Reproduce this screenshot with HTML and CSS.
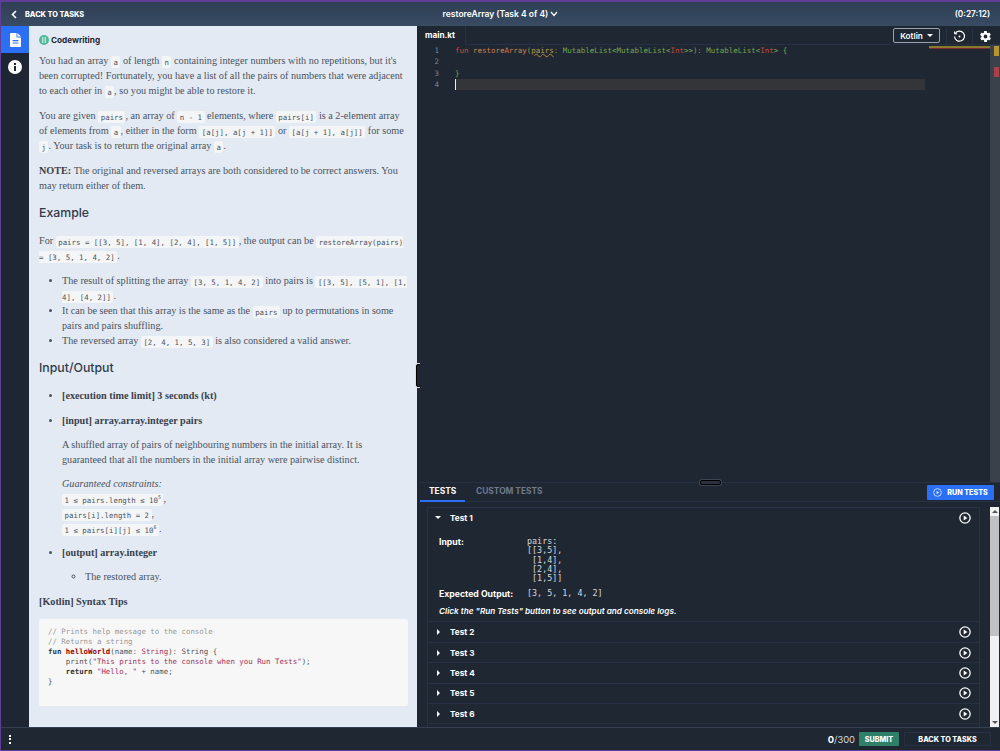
FILE: index.html
```html
<!DOCTYPE html>
<html lang="en">
<head>
    <meta charset="UTF-8">
    <title>restoreArray (Task 4 of 4)</title>
    <link rel="stylesheet" href="styles.css">
</head>
<body>
<div class="app">

    <!-- Top bar -->
    <header class="topbar">
        <a class="back">
            <svg width="6" height="9" viewBox="0 0 6 9"><path d="M5 1 1.5 4.5 5 8" fill="none" stroke="#fff" stroke-width="1.6"/></svg>
            <span>BACK TO TASKS</span>
        </a>
        <div class="task-title">restoreArray (Task 4 of 4)
            <svg width="8" height="6" viewBox="0 0 8 6"><path d="M1 1 4 4.5 7 1" fill="none" stroke="#fff" stroke-width="1.2"/></svg>
        </div>
        <div class="timer">(0:27:12)</div>
    </header>

    <div class="main">
        <!-- Sidebar -->
        <nav class="sidebar">
            <div class="side-btn active">
                <svg width="11" height="14" viewBox="0 0 11 14"><path fill="#fff" d="M6.5 0H1a1 1 0 0 0-1 1v12a1 1 0 0 0 1 1h9a1 1 0 0 0 1-1V4.5H7.2a.7.7 0 0 1-.7-.7zM2.6 7h5.8v1.2H2.6zm0 2.4h5.8v1.2H2.6zM7.4 0v3.6H11z"/></svg>
            </div>
            <div class="side-btn">
                <svg width="14" height="14" viewBox="0 0 14 14"><circle cx="7" cy="7" r="7" fill="#fff"/><rect x="6" y="6" width="2" height="5" fill="#1e2633"/><rect x="6" y="3" width="2" height="2" fill="#1e2633"/></svg>
            </div>
        </nav>

        <!-- Task description -->
        <section class="description">
            <div class="kind">
                <svg width="10" height="10" viewBox="0 0 10 10"><circle cx="5" cy="5" r="5" fill="#4dbb98"/><rect x="3.2" y="2" width="1.1" height="6" fill="#e3eaf3"/><rect x="5.7" y="2" width="1.1" height="6" fill="#e3eaf3"/></svg>
                <span>Codewriting</span>
            </div>
            <p>You had an array <code>a</code> of length <code>n</code> containing integer numbers with no repetitions, but it's been corrupted! Fortunately, you have a list of all the pairs of numbers that were adjacent to each other in <code>a</code>, so you might be able to restore it.</p>
            <p>You are given <code>pairs</code>, an array of <code>n - 1</code> elements, where <code>pairs[i]</code> is a 2-element array of elements from <code>a</code>, either in the form <code>[a[j], a[j + 1]]</code> or <code>[a[j + 1], a[j]]</code> for some <code>j</code>. Your task is to return the original array <code>a</code>.</p>
            <p><strong>NOTE:</strong> The original and reversed arrays are both considered to be correct answers. You may return either of them.</p>
            <h2>Example</h2>
            <p>For <code>pairs = [[3, 5], [1, 4], [2, 4], [1, 5]]</code>, the output can be <code>restoreArray(pairs) = [3, 5, 1, 4, 2]</code>.</p>
            <ul>
                <li>The result of splitting the array <code>[3, 5, 1, 4, 2]</code> into pairs is <code>[[3, 5], [5, 1], [1, 4], [4, 2]]</code>.</li>
                <li>It can be seen that this array is the same as the <code>pairs</code> up to permutations in some pairs and pairs shuffling.</li>
                <li>The reversed array <code>[2, 4, 1, 5, 3]</code> is also considered a valid answer.</li>
            </ul>
            <h2>Input/Output</h2>
            <ul class="io">
                <li><strong>[execution time limit] 3 seconds (kt)</strong></li>
                <li>
                    <strong>[input] array.array.integer pairs</strong>
                    <p>A shuffled array of pairs of neighbouring numbers in the initial array. It is guaranteed that all the numbers in the initial array were pairwise distinct.</p>
                    <p class="constraints"><em>Guaranteed constraints:</em><br>
                        <code>1 ≤ pairs.length ≤ 10<sup>5</sup></code>,<br>
                        <code>pairs[i].length = 2</code>,<br>
                        <code>1 ≤ pairs[i][j] ≤ 10<sup>6</sup></code>.</p>
                </li>
                <li>
                    <strong>[output] array.integer</strong>
                    <ul class="sub"><li>The restored array.</li></ul>
                </li>
            </ul>
            <p class="tips"><strong>[Kotlin] Syntax Tips</strong></p>
            <pre class="snippet"><span class="c">// Prints help message to the console
// Returns a string</span>
<b>fun</b> <b class="fn">helloWorld</b>(name: <span class="s">String</span>): String {
    print(<span class="s">"This prints to the console when you Run Tests"</span>);
    <b>return</b> <span class="s">"Hello, "</span> + name;
}</pre>
        </section>

        <div class="splitter"><span class="grip"></span></div>

        <div class="workspace">
            <!-- Editor -->
            <section class="editor">
                <div class="editor-head">
                    <div class="file-tab">main.kt</div>
                    <div class="editor-tools">
                        <div class="lang">Kotlin <i class="caret"></i></div>
                        <div class="tool">
                            <svg width="13" height="13" viewBox="0 0 13 13" fill="none" stroke="#fff" stroke-width="1.2"><path d="M2.2 3.6A5 5 0 1 1 1.5 6.5"/><path d="M1.6 1.4v2.5h2.5" stroke-width="1"/><circle cx="6.5" cy="6.5" r=".9" fill="#fff" stroke="none"/></svg>
                        </div>
                        <div class="tool">
                            <svg width="13" height="13" viewBox="0 0 24 24"><path fill="#fff" d="M19.4 13c.1-.3.1-.7.1-1s0-.7-.1-1l2.1-1.6c.2-.2.2-.4.1-.6l-2-3.5c-.1-.2-.4-.3-.6-.2l-2.5 1a7 7 0 0 0-1.7-1l-.4-2.6c0-.3-.2-.5-.5-.5h-4c-.3 0-.5.2-.5.5l-.4 2.6a7 7 0 0 0-1.7 1l-2.5-1c-.2-.1-.5 0-.6.2l-2 3.5c-.1.2-.1.4.1.6L4.6 11c-.1.3-.1.7-.1 1s0 .7.1 1l-2.1 1.6c-.2.2-.2.4-.1.6l2 3.5c.1.2.4.3.6.2l2.5-1c.5.4 1.1.7 1.7 1l.4 2.6c0 .3.2.5.5.5h4c.3 0 .5-.2.5-.5l.4-2.6a7 7 0 0 0 1.7-1l2.5 1c.2.1.5 0 .6-.2l2-3.5c.1-.2.1-.4-.1-.6zM12 15.5a3.5 3.5 0 1 1 0-7 3.5 3.5 0 0 1 0 7z"/></svg>
                        </div>
                    </div>
                </div>
                <div class="editor-body">
                    <div class="code">
                        <div class="line"><span class="num">1</span><span class="src"><span class="kw">fun</span> <span class="fnc">restoreArray</span><span class="ty">(</span><span class="warn">pairs</span><span class="ty">: MutableList&lt;MutableList&lt;</span><span class="kw">Int</span><span class="ty">&gt;&gt;): MutableList&lt;</span><span class="kw">Int</span><span class="ty">&gt; {</span></span></div>
                        <div class="line"><span class="num">2</span><span class="src"></span></div>
                        <div class="line"><span class="num">3</span><span class="src"><span class="ty">}</span></span></div>
                        <div class="line current"><span class="num">4</span><span class="src"></span></div>
                    </div>
                    <div class="overview">
                        <i class="mark-y"></i><i class="mark-r"></i>
                    </div>
                    <i class="mini"></i>
                </div>
            </section>

            <span class="hgrip"></span>

            <!-- Tests -->
            <section class="tests">
                <div class="tabs">
                    <div class="tab active">TESTS</div>
                    <div class="tab">CUSTOM TESTS</div>
                    <button class="run-btn">
                        <svg width="9" height="9" viewBox="0 0 14 14" fill="none"><circle cx="7" cy="7" r="6" stroke="#cfe0ff" stroke-width="1.4"/><path d="M5.5 4.2 9.7 7l-4.2 2.8z" fill="#cfe0ff"/></svg>
                        RUN TESTS
                    </button>
                </div>
                <div class="test-area">
                    <div class="test-list">
                        <div class="test open">
                            <div class="test-head"><i class="arrow-down"></i><span>Test 1</span><svg class="play" width="12" height="12" viewBox="0 0 14 14" fill="none"><circle cx="7" cy="7" r="6" stroke="#fff" stroke-width="1.5"/><path d="M5.5 4 9.8 7l-4.3 3z" fill="#fff"/></svg></div>
                            <div class="test-body">
                                <div class="io-row"><span class="io-label">Input:</span><pre class="io-val">pairs:
[[3,5],
 [1,4],
 [2,4],
 [1,5]]</pre></div>
                                <div class="io-row expected"><span class="io-label">Expected Output:</span><pre class="io-val">[3, 5, 1, 4, 2]</pre></div>
                                <div class="hint">Click the "Run Tests" button to see output and console logs.</div>
                            </div>
                        </div>
                        <div class="test"><div class="test-head"><i class="arrow"></i><span>Test 2</span><svg class="play" width="12" height="12" viewBox="0 0 14 14" fill="none"><circle cx="7" cy="7" r="6" stroke="#fff" stroke-width="1.5"/><path d="M5.5 4 9.8 7l-4.3 3z" fill="#fff"/></svg></div></div>
                        <div class="test"><div class="test-head"><i class="arrow"></i><span>Test 3</span><svg class="play" width="12" height="12" viewBox="0 0 14 14" fill="none"><circle cx="7" cy="7" r="6" stroke="#fff" stroke-width="1.5"/><path d="M5.5 4 9.8 7l-4.3 3z" fill="#fff"/></svg></div></div>
                        <div class="test"><div class="test-head"><i class="arrow"></i><span>Test 4</span><svg class="play" width="12" height="12" viewBox="0 0 14 14" fill="none"><circle cx="7" cy="7" r="6" stroke="#fff" stroke-width="1.5"/><path d="M5.5 4 9.8 7l-4.3 3z" fill="#fff"/></svg></div></div>
                        <div class="test"><div class="test-head"><i class="arrow"></i><span>Test 5</span><svg class="play" width="12" height="12" viewBox="0 0 14 14" fill="none"><circle cx="7" cy="7" r="6" stroke="#fff" stroke-width="1.5"/><path d="M5.5 4 9.8 7l-4.3 3z" fill="#fff"/></svg></div></div>
                        <div class="test"><div class="test-head"><i class="arrow"></i><span>Test 6</span><svg class="play" width="12" height="12" viewBox="0 0 14 14" fill="none"><circle cx="7" cy="7" r="6" stroke="#fff" stroke-width="1.5"/><path d="M5.5 4 9.8 7l-4.3 3z" fill="#fff"/></svg></div></div>
                    </div>
                    <div class="scrollbar">
                        <i class="sb-up"></i><div class="sb-thumb"></div><i class="sb-down"></i>
                    </div>
                </div>
            </section>
        </div>
    </div>

    <!-- Bottom bar -->
    <footer class="footer">
        <div class="dots"><i></i><i></i><i></i></div>
        <div class="score"><b>0</b>/300</div>
        <button class="submit">SUBMIT</button>
        <button class="back-btn">BACK TO TASKS</button>
    </footer>
</div>
</body>
</html>
```

FILE: styles.css
```css
* {
    box-sizing: border-box;
}

html, body {
    margin: 0;
    height: 100%;
}

body {
    background: #5f3d99;
    font-family: Inter, sans-serif;
    color: #fff;
}

.app {
    height: 751px;
    padding: 2px 0 1px 1px;
    display: flex;
    flex-direction: column;
    overflow: hidden;
}

/* top bar */
.topbar {
    height: 24px;
    flex: none;
    background: linear-gradient(#2f3f55, #384b63);
    display: grid;
    grid-template-columns: 1fr 1fr 1fr;
    align-items: center;
    font-size: 8px;
}

.back {
    display: flex;
    align-items: center;
    gap: 8px;
    padding-left: 10px;
    font-weight: 800;
    font-size: 7.3px;
}

.task-title {
    font-size: 8.5px;
    font-weight: 600;
    white-space: nowrap;
    justify-self: center;
}

.timer {
    text-align: right;
    font-size: 8.3px;
    font-weight: 600;
    padding-right: 10px;
}

.main {
    flex: 1;
    display: flex;
    min-height: 0;
}

/* sidebar */
.sidebar {
    width: 28px;
    flex: none;
    background: #1e2633;
}

.side-btn {
    height: 27px;
    display: flex;
    align-items: center;
    justify-content: center;
}

.side-btn.active {
    background: #2b6ff5;
}

/* description */
.description {
    width: 388px;
    flex: none;
    background: #e3eaf3;
    color: #4b535e;
    padding: 8px 9px 0 10px;
    font-family: "Liberation Serif", serif;
    font-size: 10.2px;
    line-height: 15px;
    overflow: hidden;
}

.kind {
    display: flex;
    align-items: center;
    gap: 2px;
    height: 12px;
    margin-bottom: 7px;
    font-family: Inter, sans-serif;
    font-size: 8.2px;
    font-weight: 700;
    color: #1e2633;
}

.description p {
    margin: 0 0 10px;
}

.description strong {
    color: #3a414b;
}

code {
    font-family: "DejaVu Sans Mono", monospace;
    font-size: 7.4px;
    line-height: 1;
    background: #f4f5f6;
    border-radius: 2px;
    padding: 1.5px 2.5px;
}

sup {
    font-size: 5px;
    line-height: 0;
}

.description h2 {
    font-family: Inter, sans-serif;
    font-size: 12.3px;
    font-weight: 500;
    color: #2f3b4c;
    margin: 0;
    padding: 2px 0 13px;
    line-height: 15px;
}

.description ul {
    margin: 0 0 10px;
    padding-left: 23px;
}

.io > li {
    margin-bottom: 9px;
}

.io > li:first-child {
    margin-bottom: 10px;
}

.io > li p {
    margin-top: 9px;
    margin-bottom: 0;
}

.sub {
    list-style: circle;
    margin-top: 9px !important;
    margin-bottom: 0 !important;
}

.snippet {
    margin: 0;
    height: 87px;
    padding: 8px 9px;
    background: #f7f7f7;
    border-radius: 2px;
    font-family: "DejaVu Sans Mono", monospace;
    font-size: 7.4px;
    line-height: 10px;
    color: #555;
}

.snippet .c { color: #999; }
.snippet b { color: #333; }
.snippet .fn { color: #900; }
.snippet .s { color: #a3325c; }

/* splitter */
.splitter {
    width: 3px;
    flex: none;
    background: #1e2633;
    position: relative;
}

.grip {
    position: absolute;
    left: -1px;
    top: 338px;
    width: 5px;
    height: 23px;
    background: #1e2633;
    border: 1px solid #000;
    border-radius: 2px;
    box-shadow: 0 0 0 1px #d9dfe6;
}

/* editor */
.workspace {
    flex: 1;
    min-width: 0;
    display: flex;
    flex-direction: column;
    background: #1f2733;
    position: relative;
}

.editor {
    height: 456px;
    flex: none;
    display: flex;
    flex-direction: column;
}

.editor-head {
    height: 19px;
    flex: none;
    display: flex;
    justify-content: space-between;
    border-bottom: 1px solid #263244;
}

.file-tab {
    width: 46px;
    height: 19px;
    padding: 4px 0 0 5px;
    font-size: 8.2px;
    font-weight: 700;
    background: #1f2733;
    border-right: 1px solid #263244;
}

.editor-tools {
    display: flex;
    align-items: flex-start;
    padding-top: 2px;
}

.lang {
    width: 47px;
    height: 15px;
    margin-right: 6px;
    border: 1px solid #9aa3ae;
    border-radius: 2px;
    font-size: 8.2px;
    font-weight: 600;
    display: flex;
    align-items: center;
    justify-content: center;
    gap: 4px;
}

.caret {
    border: 3px solid transparent;
    border-top-color: #fff;
    border-bottom: 0;
}

.tool {
    width: 26px;
    height: 16px;
    display: flex;
    align-items: center;
    justify-content: center;
    border-left: 1px solid #263244;
}

.editor-tools .tool:last-child {
    padding-right: 0;
    margin-right: 2px;
}

.editor-body {
    flex: 1;
    display: flex;
    position: relative;
    min-height: 0;
}

.code {
    flex: 1;
    font-family: "DejaVu Sans Mono", monospace;
    font-size: 7.46px;
}

.line {
    display: flex;
    height: 11.3px;
    line-height: 11.3px;
}

.num {
    width: 35px;
    flex: none;
    padding-right: 16px;
    text-align: right;
    color: #7b8593;
}

.src {
    width: 470px;
    flex: none;
    white-space: pre;
}

.current .src {
    background: #333538;
    border-left: 1px solid #eee;
}

.kw { color: #c9483a; }
.fnc { color: #cf7f4c; }
.ty { color: #76a34f; }

.warn {
    color: #c29a4c;
    text-decoration: underline wavy #b5893a .6px;
    text-underline-offset: 0;
}

.overview {
    position: absolute;
    right: 0;
    top: 0;
    bottom: 0;
    width: 10px;
    background: #3b414b;
}

.mark-y, .mark-r {
    position: absolute;
    left: 4px;
    width: 5px;
}

.mark-y { top: 1px; height: 10px; background: #b8962f; }
.mark-r { top: 22px; height: 10px; background: #a8404a; }

.mini {
    position: absolute;
    left: 509px;
    top: 1px;
    width: 61px;
    height: 3px;
    background: linear-gradient(#8c7a2e 50%, #7c2c34 50%);
}

.hgrip {
    position: absolute;
    left: 280px;
    top: 454px;
    width: 21px;
    height: 5px;
    border: 1px solid #000;
    border-radius: 2px;
    background: #2a3240;
    box-shadow: 0 0 0 1px #3a4554;
    z-index: 2;
}

/* tests */
.tests {
    flex: 1;
    min-height: 0;
    display: flex;
    flex-direction: column;
    border-top: 1px solid #263244;
}

.tabs {
    height: 19px;
    flex: none;
    display: flex;
    align-items: stretch;
    border-bottom: 1px solid #263244;
    position: relative;
    font-size: 8.4px;
    font-weight: 700;
}

.tab {
    padding: 3px 9px 0;
    color: #6f7a8c;
}

.tab:nth-child(2) {
    padding-left: 11px;
}

.tab.active {
    color: #fff;
    width: 45px;
    border-bottom: 2px solid #2b6ff5;
    height: 19px;
}

.run-btn {
    margin-left: auto;
    margin-right: 6px;
    margin-top: 2px;
    width: 67px;
    height: 15px;
    background: #2b6ff5;
    color: #fff;
    border: 0;
    border-radius: 1px;
    font-family: Inter, sans-serif;
    font-size: 7.2px;
    font-weight: 800;
    display: flex;
    align-items: center;
    justify-content: center;
    gap: 5px;
    padding: 0;
}

.test-area {
    flex: 1;
    min-height: 0;
    display: flex;
    padding: 5px 0 0 7px;
    overflow: hidden;
}

.test-list {
    width: 553px;
    flex: none;
    border: 1px solid #263244;
    border-bottom: 0;
}

.test {
    border-bottom: 1px solid #263244;
}

.test-head {
    height: 19.4px;
    display: flex;
    align-items: center;
    padding: 0 8px 0 7px;
    font-size: 8.2px;
    font-weight: 700;
}

.test-head span {
    margin-left: 7px;
}

.test.open .test-head {
    height: 19px;
}

.play {
    margin-left: auto;
}

.arrow {
    width: 5px;
    border: 3px solid transparent;
    border-left-color: #fff;
    border-right: 0;
    margin-left: 2px;
    margin-right: 1px;
}

.arrow-down {
    width: 6px;
    border: 3px solid transparent;
    border-top-color: #fff;
    border-bottom: 0;
    margin-right: 2px;
}

.test-body {
    padding: 10px 11px 5px;
    font-size: 8.7px;
}

.io-row {
    display: flex;
}

.io-label {
    width: 88px;
    flex: none;
    font-weight: 700;
}

.io-val {
    margin: 0;
    font-family: "DejaVu Sans Mono", monospace;
    font-size: 8.4px;
    line-height: 9.3px;
    color: #d5d9df;
}

.expected {
    margin-top: 6px;
}

.hint {
    margin-top: 7px;
    font-size: 8.2px;
    font-style: italic;
    font-weight: 600;
}

.scrollbar {
    width: 9px;
    margin-left: 10px;
    background: #f1f1f1;
    display: flex;
    flex-direction: column;
    align-items: center;
}

.sb-up, .sb-down {
    flex: none;
    margin: 3px 0;
    border: 3px solid transparent;
}

.sb-up { border-bottom-color: #555; border-top: 0; }
.sb-down { border-top-color: #555; border-bottom: 0; margin-top: auto; }

.sb-thumb {
    width: 100%;
    height: 120px;
    background: #c1c1c1;
}

/* footer */
.footer {
    height: 23px;
    flex: none;
    background: #1f2733;
    border-top: 1px solid #34404f;
    display: flex;
    align-items: center;
    padding: 0 9px 0 8px;
    font-size: 9.4px;
}

.dots {
    display: flex;
    flex-direction: column;
    gap: 1.5px;
    margin-right: auto;
}

.dots i {
    width: 2px;
    height: 2px;
    background: #fff;
}

.score {
    margin-right: 4px;
    color: #d5d9df;
}

.score b {
    color: #fff;
}

.submit, .back-btn {
    height: 14px;
    border: 0;
    color: #fff;
    font-family: Inter, sans-serif;
    font-size: 7.2px;
    font-weight: 800;
    padding: 0;
}

.submit {
    width: 40px;
    background: #2f8069;
    border-radius: 1px;
}

.back-btn {
    width: 87px;
    margin-left: 5px;
    background: #1f2733;
    border: 1px solid #263244;
}
```
